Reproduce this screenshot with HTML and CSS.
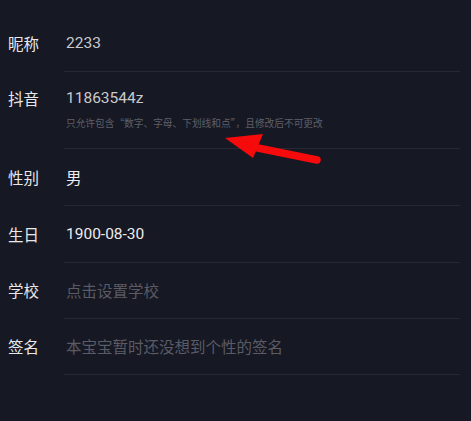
FILE: index.html
```html
<!DOCTYPE html>
<html lang="zh">
<head>
<meta charset="utf-8">
<link rel="stylesheet" href="styles.css">
</head>
<body>
<div class="list">
  <div class="row">
    <div class="label">昵称</div>
    <div class="content"><div class="value dim">2233</div></div>
  </div>
  <div class="row tall">
    <div class="label">抖音</div>
    <div class="content">
      <div class="value dim">11863544z</div>
      <div class="hint">只允许包含“数字、字母、下划线和点”，且修改后不可更改</div>
    </div>
  </div>
  <div class="row">
    <div class="label">性别</div>
    <div class="content"><div class="value cjk">男</div></div>
  </div>
  <div class="row">
    <div class="label">生日</div>
    <div class="content"><div class="value">1900-08-30</div></div>
  </div>
  <div class="row short">
    <div class="label">学校</div>
    <div class="content"><div class="value placeholder">点击设置学校</div></div>
  </div>
  <div class="row short">
    <div class="label">签名</div>
    <div class="content"><div class="value placeholder">本宝宝暂时还没想到个性的签名</div></div>
  </div>
</div>
<svg class="arrow" width="471" height="421" viewBox="0 0 471 421">
  <line x1="248" y1="146" x2="317" y2="160" stroke="#f50b0b" stroke-width="7.5" stroke-linecap="round"/>
  <polygon points="225,138 263,134 253,158" fill="#f50b0b"/>
</svg>
</body>
</html>
```
FILE: styles.css
```css
html, body {
  margin: 0;
  padding: 0;
  background: #161823;
  width: 471px;
  height: 421px;
  overflow: hidden;
}
body {
  position: relative;
  font-family: Roboto, "Noto Sans CJK SC", sans-serif;
}
.list {
  padding-top: 15px;
}
.row {
  display: flex;
  align-items: flex-start;
  padding-left: 8px;
}
.label {
  width: 56px;
  padding-top: 20px;
  font-family: "Noto Sans CJK SC", sans-serif;
  font-size: 15.5px;
  line-height: 16px;
  color: #e8e8ea;
}
.row.tall .label {
  padding-top: 18px;
}
.row.short .label {
  padding-top: 19px;
}
.content {
  flex: 1;
  margin-right: 11px;
  padding: 20px 0 20px 2px;
  border-bottom: 1px solid #262833;
}
.row.tall .content {
  padding-top: 18px;
}
.row.tall .hint {
  margin-bottom: -1px;
}
.row.short .content {
  padding-top: 19px;
}
.value {
  font-size: 15.5px;
  line-height: 16px;
  color: #ececee;
}
.value.cjk {
  font-family: "Noto Sans CJK SC", sans-serif;
}
.value.dim {
  color: #c9cace;
}
.value.placeholder {
  font-family: "Noto Sans CJK SC", sans-serif;
  color: #5a5b65;
}
.hint {
  margin-top: 11px;
  font-family: "Noto Sans CJK SC", sans-serif;
  font-size: 9.7px;
  line-height: 12px;
  color: #5f606a;
  white-space: nowrap;
}
.arrow {
  position: absolute;
  left: 0;
  top: 0;
  pointer-events: none;
}
```
